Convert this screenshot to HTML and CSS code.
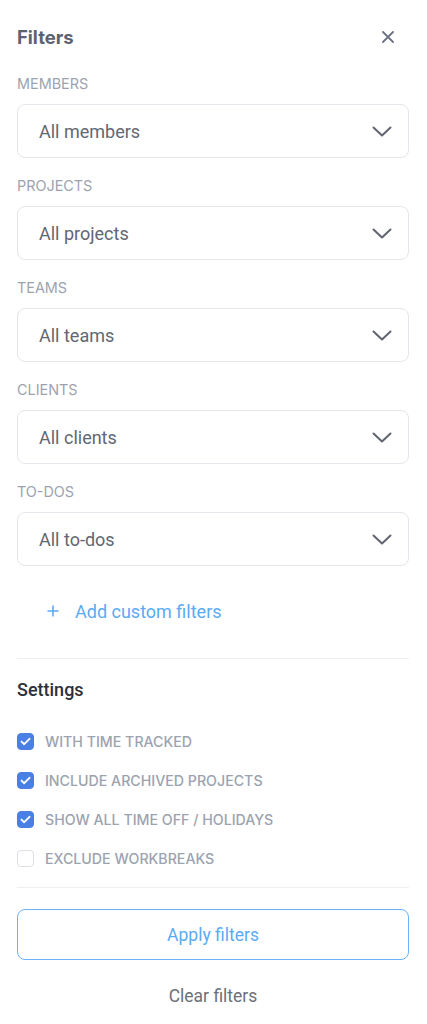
FILE: index.html
```html
<!DOCTYPE html>
<html>
<head>
<meta charset="utf-8">
<link rel="stylesheet" href="styles.css">
</head>
<body>
<div class="panel">
  <div class="header">
    <h1 class="title">Filters</h1>
    <button class="close" aria-label="Close">
      <svg width="12" height="12" viewBox="0 0 12 12"><path d="M1 1L11 11M11 1L1 11" stroke="#6b7280" stroke-width="1.8" stroke-linecap="round"/></svg>
    </button>
  </div>

  <div class="group">
    <div class="label">MEMBERS</div>
    <div class="select"><span>All members</span><svg class="chev" width="20" height="11" viewBox="0 0 20 11"><path d="M1.5 1.5L10 9.5L18.5 1.5" fill="none" stroke="#5f6470" stroke-width="2" stroke-linecap="round" stroke-linejoin="round"/></svg></div>
  </div>
  <div class="group">
    <div class="label">PROJECTS</div>
    <div class="select"><span>All projects</span><svg class="chev" width="20" height="11" viewBox="0 0 20 11"><path d="M1.5 1.5L10 9.5L18.5 1.5" fill="none" stroke="#5f6470" stroke-width="2" stroke-linecap="round" stroke-linejoin="round"/></svg></div>
  </div>
  <div class="group">
    <div class="label">TEAMS</div>
    <div class="select"><span>All teams</span><svg class="chev" width="20" height="11" viewBox="0 0 20 11"><path d="M1.5 1.5L10 9.5L18.5 1.5" fill="none" stroke="#5f6470" stroke-width="2" stroke-linecap="round" stroke-linejoin="round"/></svg></div>
  </div>
  <div class="group">
    <div class="label">CLIENTS</div>
    <div class="select"><span>All clients</span><svg class="chev" width="20" height="11" viewBox="0 0 20 11"><path d="M1.5 1.5L10 9.5L18.5 1.5" fill="none" stroke="#5f6470" stroke-width="2" stroke-linecap="round" stroke-linejoin="round"/></svg></div>
  </div>
  <div class="group">
    <div class="label">TO-DOS</div>
    <div class="select"><span>All to-dos</span><svg class="chev" width="20" height="11" viewBox="0 0 20 11"><path d="M1.5 1.5L10 9.5L18.5 1.5" fill="none" stroke="#5f6470" stroke-width="2" stroke-linecap="round" stroke-linejoin="round"/></svg></div>
  </div>

  <div class="add">
    <svg width="12" height="12" viewBox="0 0 12 12"><path d="M6 0.5V11.5M0.5 6H11.5" stroke="#5aabf5" stroke-width="1.6"/></svg>
    <span>Add custom filters</span>
  </div>

  <hr class="divider">

  <h2 class="settings">Settings</h2>
  <ul class="checks">
    <li><span class="box on"><svg width="11" height="9" viewBox="0 0 11 9"><path d="M1.5 4.6L4.2 7.2L9.5 1.8" fill="none" stroke="#fff" stroke-width="1.9" stroke-linecap="round" stroke-linejoin="round"/></svg></span>WITH TIME TRACKED</li>
    <li><span class="box on"><svg width="11" height="9" viewBox="0 0 11 9"><path d="M1.5 4.6L4.2 7.2L9.5 1.8" fill="none" stroke="#fff" stroke-width="1.9" stroke-linecap="round" stroke-linejoin="round"/></svg></span>INCLUDE ARCHIVED PROJECTS</li>
    <li><span class="box on"><svg width="11" height="9" viewBox="0 0 11 9"><path d="M1.5 4.6L4.2 7.2L9.5 1.8" fill="none" stroke="#fff" stroke-width="1.9" stroke-linecap="round" stroke-linejoin="round"/></svg></span>SHOW ALL TIME OFF / HOLIDAYS</li>
    <li><span class="box"></span>EXCLUDE WORKBREAKS</li>
  </ul>

  <hr class="divider bottom">

  <button class="apply">Apply filters</button>
  <button class="clear">Clear filters</button>
</div>
</body>
</html>
```

FILE: styles.css
```css
* { box-sizing: border-box; }
html, body { margin: 0; padding: 0; background: #fff; }
body { font-family: Inter, Roboto, "Noto Sans", "Liberation Sans", sans-serif; }

.panel {
  padding: 0 18px 0 17px;
  display: flex;
  flex-direction: column;
}

.header {
  display: flex;
  justify-content: space-between;
  align-items: center;
  height: 74px;
}
.title {
  margin: 0;
  font-size: 18.5px;
  font-weight: 700;
  color: #5c6270;
}
.close {
  border: 0;
  background: none;
  padding: 0;
  width: 14px;
  height: 14px;
  margin-right: 14px;
  display: flex;
  align-items: center;
  justify-content: center;
}

.group { display: flex; flex-direction: column; }
.label {
  font-size: 14.4px;
  color: #9ca3af;
  line-height: 20px;
  height: 20px;
}
.group + .group .label { margin-top: 18px; }
.select {
  margin-top: 10px;
  height: 54px;
  border: 1px solid #e3e6ea;
  border-radius: 8px;
  display: flex;
  align-items: center;
  justify-content: space-between;
  padding: 0 16px 0 21px;
  font-family: Roboto, "Noto Sans", sans-serif;
  font-size: 18px;
  color: #616773;
}
.chev { margin-top: 1px; }

.add {
  display: flex;
  align-items: center;
  gap: 16px;
  padding-left: 30px;
  margin-top: 35px;
  height: 20px;
  font-family: Roboto, "Noto Sans", sans-serif;
  font-size: 18px;
  color: #5aabf5;
}

.divider {
  border: 0;
  border-top: 1.5px solid #eeeff1;
  margin: 37px 0 0 0;
}

.settings {
  margin: 21px 0 0 0;
  font-family: Roboto, "Noto Sans", sans-serif;
  font-size: 18px;
  font-weight: 500;
  color: #2b303b;
  line-height: 20px;
}

.checks {
  list-style: none;
  margin: 31px 0 0 0;
  padding: 0;
  display: flex;
  flex-direction: column;
  gap: 19px;
}
.checks li {
  display: flex;
  align-items: center;
  gap: 11px;
  height: 20px;
  font-size: 14.2px;
  font-weight: 500;
  color: #9ca3af;
}
.box {
  width: 17px;
  height: 17px;
  border-radius: 4px;
  border: 1.5px solid #dcdfe4;
  display: flex;
  align-items: center;
  justify-content: center;
  flex: none;
}
.box.on {
  background: #4a80e3;
  border-color: #4a80e3;
}

.divider.bottom { margin-top: 19px; }

.apply {
  margin-top: 21px;
  height: 51px;
  border: 1.5px solid #6ab3f7;
  border-radius: 8px;
  background: #fff;
  font-family: Roboto, "Noto Sans", sans-serif;
  font-size: 17.5px;
  color: #5aabf5;
}
.clear {
  margin-top: 18px;
  border: 0;
  background: none;
  font-family: Roboto, "Noto Sans", sans-serif;
  font-size: 17.5px;
  color: #6b7079;
  height: 36px;
}
```
